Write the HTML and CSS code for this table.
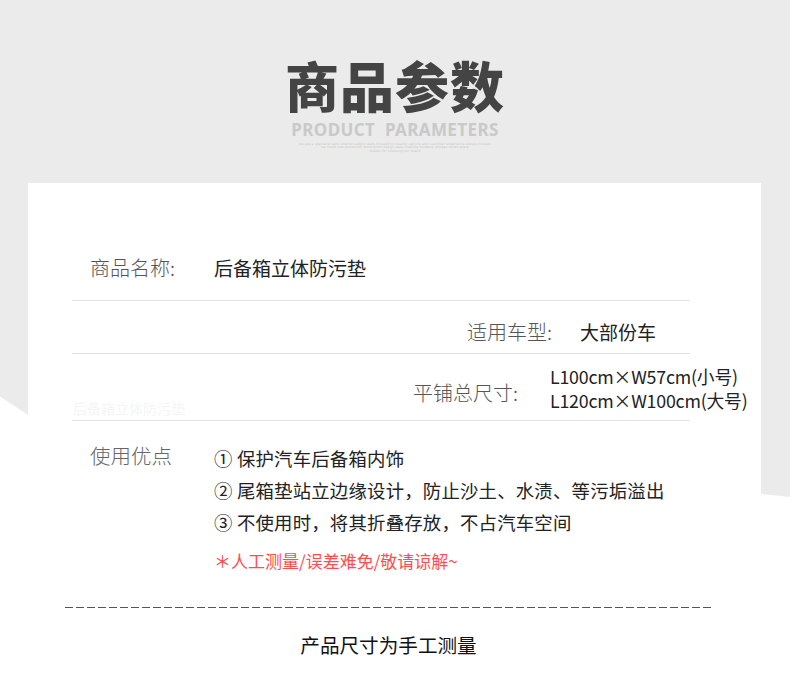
FILE: index.html
```html
<!doctype html>
<html lang="zh-CN">
	<head>
		<meta charset="UTF-8">
		<title>商品参数</title>
		<link rel="stylesheet" href="styles.css">
	</head>
	<body>
		<div class="head">
			<h1 class="title">商品参数</h1>
			<p class="subtitle">PRODUCT&nbsp; PARAMETERS</p>
			<div class="tiny">
				<p>we are a specialist auto interior supply team focused on quality service and customer experience always trusted</p>
				<p>car trunk mat protection waterproof design easy cleaning foldable storage saves space</p>
				<p>thanks for choosing our brand</p>
			</div>
		</div>
		<div class="main">
			<div class="side side-l"></div>
			<div class="card">
				<div class="row row1">
					<span class="label">商品名称:</span>
					<span class="value">后备箱立体防污垫</span>
				</div>
				<div class="row row2">
					<span class="label">适用车型:</span>
					<span class="value">大部份车</span>
				</div>
				<div class="row row3">
					<span class="ghost">后备箱立体防污垫</span>
					<span class="label">平铺总尺寸:</span>
					<span class="value sizes">L100cm×W57cm(小号)<br>L120cm×W100cm(大号)</span>
				</div>
				<div class="use">
					<span class="label">使用优点</span>
					<div class="use-list">
						<p>① 保护汽车后备箱内饰</p>
						<p>② 尾箱垫站立边缘设计，防止沙土、水渍、等污垢溢出</p>
						<p>③ 不使用时，将其折叠存放，不占汽车空间</p>
						<p class="note">＊人工测量/误差难免/敬请谅解~</p>
					</div>
				</div>
				<div class="dash"></div>
				<p class="foot">产品尺寸为手工测量</p>
			</div>
			<div class="side side-r"></div>
		</div>
	</body>
</html>
```

FILE: styles.css
```css
html,body{
	margin:0;
	padding:0;
}
body{
	width:790px;
	height:689px;
	overflow:hidden;
	background-color:#fff;
	font-family:"Noto Sans CJK SC","Noto Sans",sans-serif;
	color:#222;
}
p{
	margin:0;
}
.head{
	height:183px;
	background-color:#ebebeb;
	text-align:center;
	padding-top:54px;
	box-sizing:border-box;
}
.title{
	margin:0;
	font-size:54px;
	line-height:62px;
	font-weight:900;
	color:#444;
	letter-spacing:1px;
}
.subtitle{
	margin-top:4px;
	font-family:"Noto Sans","Open Sans",sans-serif;
	font-size:17px;
	line-height:20px;
	font-weight:700;
	color:#c9c9c9;
	letter-spacing:0.4px;
}
.tiny{
	margin-top:3px;
	color:#c4c4c4;
	font-family:"DejaVu Sans",sans-serif;
	font-size:3px;
	line-height:3.4px;
	letter-spacing:0.2px;
}
.main{
	display:grid;
	grid-template-columns:28px 733px 29px;
	align-items:start;
}
.side{
	background-color:#ebebeb;
}
.side-l{
	height:232px;
	clip-path:polygon(0 0,100% 0,100% 100%,0 92%);
}
.side-r{
	height:314px;
	clip-path:polygon(0 0,100% 0,100% 100%,0 99%);
}
.card{
	padding-top:52px;
}
.row{
	display:flex;
	box-sizing:border-box;
	margin-left:44px;
	width:618px;
	border-bottom:1px solid #e3e3e3;
	font-size:20px;
	line-height:28px;
	white-space:nowrap;
}
.label{
	flex-shrink:0;
	color:#555;
	font-weight:300;
}
.value{
	flex-shrink:0;
	color:#222;
}
.row1{
	padding:19px 0 18px 18px;
}
.row1 .label{
	width:124px;
}
.row1 .value{
	font-size:19px;
}
.row2{
	padding:17px 0 7px 395px;
}
.row2 .label{
	width:113px;
}
.row2 .value{
	font-size:19px;
}
.row3{
	padding:10px 0 4px 1px;
	align-items:flex-start;
}
.ghost{
	flex-shrink:0;
	width:340px;
	margin-top:36px;
	font-size:14px;
	line-height:16px;
	color:#f5f5f5;
}
.row3 .label{
	width:137px;
	margin-top:15px;
}
.sizes{
	font-size:17.8px;
	line-height:24px;
	letter-spacing:-0.2px;
}
.use{
	display:flex;
	margin-left:62px;
	padding-top:20px;
	font-size:20.5px;
	line-height:28px;
}
.use .label{
	width:124px;
	color:#666;
}
.use-list{
	margin-top:1px;
	font-size:18.4px;
	line-height:32px;
	letter-spacing:0.2px;
	color:#222;
}
.note{
	margin-top:11px;
	font-size:17px;
	line-height:24px;
	letter-spacing:0;
	color:#ff4d4d;
}
.dash{
	margin:34px 0 0 37px;
	width:647px;
	height:1px;
	background-image:repeating-linear-gradient(90deg,#555 0,#555 8px,transparent 8px,transparent 11px);
}
.foot{
	margin-top:23px;
	padding-right:12px;
	text-align:center;
	font-size:19.6px;
	line-height:28px;
	color:#111;
}
```
